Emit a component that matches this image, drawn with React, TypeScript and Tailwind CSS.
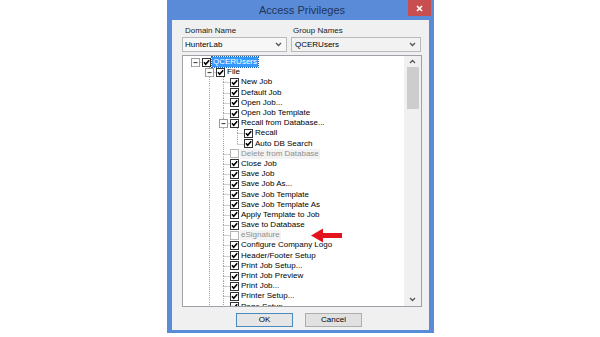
import React from "react";

type Item = {
  label: string;
  level: number;
  expander?: boolean;
  checked?: boolean;
  disabled?: boolean;
  selected?: boolean;
};

const items: Item[] = [
  { label: "QCERUsers", level: 0, expander: true, checked: true, selected: true },
  { label: "File", level: 1, expander: true, checked: true },
  { label: "New Job", level: 2, checked: true },
  { label: "Default Job", level: 2, checked: true },
  { label: "Open Job...", level: 2, checked: true },
  { label: "Open Job Template", level: 2, checked: true },
  { label: "Recall from Database...", level: 2, expander: true, checked: true },
  { label: "Recall", level: 3, checked: true },
  { label: "Auto DB Search", level: 3, checked: true },
  { label: "Delete from Database", level: 2, disabled: true },
  { label: "Close Job", level: 2, checked: true },
  { label: "Save Job", level: 2, checked: true },
  { label: "Save Job As...", level: 2, checked: true },
  { label: "Save Job Template", level: 2, checked: true },
  { label: "Save Job Template As", level: 2, checked: true },
  { label: "Apply Template to Job", level: 2, checked: true },
  { label: "Save to Database", level: 2, checked: true },
  { label: "eSignature", level: 2, disabled: true },
  { label: "Configure Company Logo", level: 2, checked: true },
  { label: "Header/Footer Setup", level: 2, checked: true },
  { label: "Print Job Setup...", level: 2, checked: true },
  { label: "Print Job Preview", level: 2, checked: true },
  { label: "Print Job...", level: 2, checked: true },
  { label: "Printer Setup...", level: 2, checked: true },
  { label: "Page Setup...", level: 2, checked: true },
];

// does the line in column c keep going below row i
function continues(i: number, c: number) {
  for (let j = i + 1; j < items.length; j++) {
    if (items[j].level < c) return false;
    if (items[j].level === c) return true;
  }
  return c === 1 || c === 2;
}

const font = { fontFamily: '"Liberation Sans", Arial, sans-serif' };

function Guide({ row, col }: { row: number; col: number }) {
  const item = items[row];
  const own = col === item.level;
  const down = continues(row, col);
  return (
    <svg width="14" height="100%" viewBox="0 0 14 10" preserveAspectRatio="none" className="shrink-0">
      <g stroke="#a0a0a0" strokeWidth="1" strokeDasharray="1 1">
        {!own && down && <line x1="7.5" y1="0" x2="7.5" y2="10" />}
        {own && item.level > 0 && <line x1="7.5" y1="0" x2="7.5" y2="5" />}
        {own && down && <line x1="7.5" y1="5" x2="7.5" y2="10" />}
        {own && <line x1="7.5" y1="5.5" x2="14" y2="5.5" />}
      </g>
      {own && item.expander && (
        <g>
          <rect x="3.5" y="1.5" width="8" height="8" fill="#fff" stroke="#9a9a9a" strokeDasharray="none" />
          <line x1="5.5" y1="5.5" x2="9.5" y2="5.5" stroke="#333" />
        </g>
      )}
    </svg>
  );
}

function Check({ checked, disabled }: { checked?: boolean; disabled?: boolean }) {
  return (
    <svg width="9" height="9" viewBox="0 0 9 9" className="shrink-0">
      <rect x="0.5" y="0.5" width="8" height="8" fill="#fff" stroke={disabled ? "#b4b4b4" : "#333"} />
      {checked && (
        <path d="M2 4.3 L3.7 6.3 L7.2 2.2" fill="none" stroke="#000" strokeWidth="1.6" />
      )}
    </svg>
  );
}

function Chevron({ up }: { up?: boolean }) {
  return (
    <svg width="7" height="5" viewBox="0 0 7 5">
      <path d={up ? "M1 4 L3.5 1.5 L6 4" : "M1 1 L3.5 3.5 L6 1"} fill="none" stroke="#555" strokeWidth="1.3" />
    </svg>
  );
}

export default function App() {
  return (
    <div className="relative w-[600px] h-[337px] bg-white overflow-hidden" style={font}>
      <div className="flex justify-center">
        <div className="w-[267px] h-[333px] bg-[#5a8bd8] flex flex-col ml-[1px]">
          {/* Title bar */}
          <div className="h-[20px] grid grid-cols-[1fr_auto_1fr] items-start">
            <div />
            <div className="text-[11px] leading-[20px] text-[#1f3557] pl-[3px]">Access Privileges</div>
            <div className="flex justify-end pr-[3px]">
              <div className="w-[23px] h-[16px] bg-[#c74f4f] flex items-center justify-center">
                <svg width="7" height="7" viewBox="0 0 7 7">
                  <path d="M1 1 L6 6 M6 1 L1 6" stroke="#fff" strokeWidth="1.6" />
                </svg>
              </div>
            </div>
          </div>

          {/* Body */}
          <div className="mx-[5px] h-[310px] bg-[#f0f0f0] pl-[10px] pr-[7px] pt-[6px] flex flex-col">
            <div className="grid grid-cols-[105px_130px] gap-x-[4px] text-[8px] leading-[10px] text-[#1a1a1a]">
              <div className="pl-[3px]">Domain Name</div>
              <div className="pl-[2px]">Group Names</div>
            </div>
            <div className="grid grid-cols-[105px_130px] gap-x-[4px] mt-[1px] text-[8px]">
              <div className="h-[15px] border border-[#b9b9b9] bg-[#f7f7f7] flex items-center justify-between pl-[2px] pr-[4px]">
                <span>HunterLab</span>
                <Chevron />
              </div>
              <div className="h-[15px] border border-[#b9b9b9] bg-[#f2f2f2] flex items-center justify-between pl-[3px] pr-[4px]">
                <span>QCERUsers</span>
                <Chevron />
              </div>
            </div>

            {/* Tree */}
            <div className="mt-[3px] w-[240px] h-[252px] border border-[#9ea2a8] bg-white flex">
              <div className="flex-1 overflow-hidden pl-[5px] pt-[1px]">
                {items.map((it, i) => (
                  <div key={i} className="h-[10.2px] flex items-center">
                    <div className="flex h-full">
                      {Array.from({ length: it.level + 1 }).map((_, c) => (
                        <Guide key={c} row={i} col={c} />
                      ))}
                    </div>
                    <Check checked={it.checked} disabled={it.disabled} />
                    <span
                      className={
                        "ml-[1px] px-[1px] text-[8px] leading-[10px] whitespace-nowrap " +
                        (it.selected
                          ? "bg-[#3399ff] text-white outline outline-1 outline-dotted outline-[#1a5fb0]"
                          : it.disabled
                          ? "bg-[#f3f3f3] text-[#8f8f8f]"
                          : "text-black")
                      }
                    >
                      {it.label}
                    </span>
                  </div>
                ))}
              </div>
              <div className="w-[17px] bg-[#f0f0f0] flex flex-col items-center">
                <div className="h-[11px] flex items-center">
                  <Chevron up />
                </div>
                <div className="w-[12px] h-[42px] bg-[#cdcdcd]" />
                <div className="flex-1" />
                <div className="h-[13px] flex items-center">
                  <Chevron />
                </div>
              </div>
            </div>

            {/* Buttons */}
            <div className="mt-[6px] flex gap-[12px] ml-[54px] text-[8px]">
              <div className="w-[57px] h-[14px] border border-[#4a89c0] bg-[#e6e6e6] flex items-center justify-center">
                OK
              </div>
              <div className="w-[57px] h-[14px] border border-[#adadad] bg-[#e1e1e1] flex items-center justify-center">
                Cancel
              </div>
            </div>
          </div>
        </div>
      </div>

      {/* red annotation arrow */}
      <svg className="absolute left-[311px] top-[228px]" width="32" height="15" viewBox="0 0 32 15">
        <path d="M0 7.5 L12 0.5 L12 5 L31 5 L31 10 L12 10 L12 14.5 Z" fill="#e3141d" />
      </svg>
    </div>
  );
}
